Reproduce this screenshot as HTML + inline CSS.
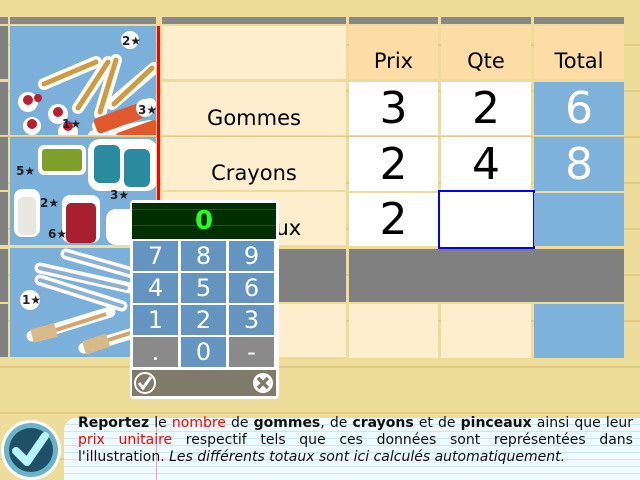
<!DOCTYPE html>
<html><head><meta charset="utf-8"><style>
*{margin:0;padding:0;box-sizing:border-box}
body{width:640px;height:480px;overflow:hidden;position:relative;font-family:"DejaVu Sans","Liberation Sans",sans-serif;
background:#eedc9a repeating-linear-gradient(to bottom,transparent 0 44px,#e2cc84 44px 46px);}
.a{position:absolute}
.c{position:absolute;display:flex;align-items:center;justify-content:center}
.cream{background:#feeece}
.hd{background:#fddca6}
.w{background:#fff}
.b{background:#7fb2da}
.g{background:#808080}
.key{position:absolute;width:45px;height:30px;background:#6494c0;color:#fff;font-size:24px;display:flex;align-items:center;justify-content:center}
.ln{white-space:nowrap;text-align:justify;text-align-last:justify;height:17px}
</style></head><body>
<div class="a" style="left:0;top:17px;width:624px;height:7px;background:#888"></div>
<div class="a" style="left:8px;top:17px;width:2px;height:7px;background:#eedc9a"></div>
<div class="a" style="left:156px;top:17px;width:6px;height:7px;background:#eedc9a"></div>
<div class="a" style="left:346px;top:17px;width:3px;height:7px;background:#eedc9a"></div>
<div class="a" style="left:438px;top:17px;width:3px;height:7px;background:#eedc9a"></div>
<div class="a" style="left:531px;top:17px;width:3px;height:7px;background:#eedc9a"></div>
<div class="a g" style="left:0;top:26px;width:8px;height:53px"></div>
<div class="a g" style="left:0;top:82px;width:8px;height:53px"></div>
<div class="a g" style="left:0;top:137px;width:8px;height:53px"></div>
<div class="a g" style="left:0;top:192px;width:8px;height:53px"></div>
<div class="a g" style="left:0;top:249px;width:8px;height:53px"></div>
<div class="a g" style="left:0;top:304px;width:8px;height:53px"></div>
<svg class="a" style="left:10px;top:26px" width="146" height="109">
<rect width="146" height="109" fill="#7bb0da"/>
<g stroke="#fff" stroke-width="12" stroke-linecap="round"><line x1="34" y1="58" x2="86" y2="36"/><line x1="68" y1="82" x2="98" y2="36"/><line x1="90" y1="88" x2="106" y2="34"/><line x1="102" y1="78" x2="144" y2="42"/><line x1="88" y1="100" x2="140" y2="78"/><line x1="84" y1="110" x2="140" y2="100"/></g>
<g stroke="#d29a3e" stroke-width="5" stroke-linecap="round"><line x1="34" y1="58" x2="86" y2="36"/><line x1="68" y1="82" x2="98" y2="36"/><line x1="90" y1="86" x2="106" y2="34"/><line x1="104" y1="78" x2="142" y2="42"/></g>
<rect x="84" y="84" width="50" height="16" rx="4" fill="#e0592c" transform="rotate(-20 110 92)"/>
<rect x="106" y="100" width="44" height="16" rx="4" fill="#e0592c" transform="rotate(-20 128 108)"/>
<g fill="#fff"><circle cx="18" cy="76" r="10"/><circle cx="48" cy="88" r="10"/><circle cx="22" cy="100" r="9"/><circle cx="58" cy="106" r="10"/><circle cx="120" cy="14" r="9"/><circle cx="135" cy="82" r="9"/></g>
<g fill="#b82030"><circle cx="18" cy="74" r="5"/><circle cx="48" cy="86" r="5"/><circle cx="22" cy="98" r="5"/><circle cx="58" cy="100" r="5"/><circle cx="28" cy="72" r="4"/></g>
<text x="112" y="19" font-size="12" font-weight="bold" fill="#222">2★</text>
<text x="128" y="88" font-size="12" font-weight="bold" fill="#222">3★</text>
<text x="52" y="102" font-size="12" font-weight="bold" fill="#222">1★</text>
</svg>
<svg class="a" style="left:10px;top:137px" width="146" height="108">
<rect width="146" height="108" fill="#7bb0da"/>
<rect x="28" y="8" width="48" height="30" rx="6" fill="#fff"/><rect x="32" y="12" width="40" height="22" rx="3" fill="#7ca02a"/>
<rect x="78" y="2" width="70" height="52" rx="12" fill="#fff"/>
<rect x="84" y="8" width="26" height="38" rx="6" fill="#2a8aa0"/><rect x="114" y="12" width="26" height="38" rx="6" fill="#2a8aa0"/>
<rect x="4" y="52" width="26" height="48" rx="8" fill="#fff"/><rect x="8" y="60" width="18" height="38" rx="5" fill="#e8e8e0"/>
<rect x="52" y="58" width="38" height="48" rx="8" fill="#fff"/><rect x="56" y="66" width="30" height="40" rx="5" fill="#a82030"/>
<rect x="96" y="72" width="40" height="36" rx="10" fill="#fff"/>
<text x="6" y="38" font-size="12" font-weight="bold" fill="#222">5★</text>
<text x="30" y="70" font-size="12" font-weight="bold" fill="#222">2★</text>
<text x="38" y="101" font-size="12" font-weight="bold" fill="#222">6★</text>
<text x="100" y="62" font-size="12" font-weight="bold" fill="#222">3★</text>
</svg>
<svg class="a" style="left:10px;top:248px" width="146" height="109">
<rect width="146" height="109" fill="#7bb0da"/>
<g stroke="#fff" stroke-width="11" stroke-linecap="round"><line x1="56" y1="6" x2="140" y2="30"/><line x1="30" y1="20" x2="120" y2="40"/><line x1="30" y1="32" x2="112" y2="58"/><line x1="22" y1="88" x2="100" y2="64"/><line x1="74" y1="100" x2="140" y2="80"/></g>
<g stroke="#8eb0d0" stroke-width="4" stroke-linecap="round"><line x1="56" y1="6" x2="140" y2="30"/><line x1="30" y1="20" x2="116" y2="40"/><line x1="30" y1="32" x2="112" y2="58"/></g>
<g stroke="#d8ba88" stroke-width="14"><line x1="22" y1="88" x2="46" y2="82"/><line x1="74" y1="100" x2="98" y2="92"/></g>
<g stroke="#d6a468" stroke-width="4"><line x1="46" y1="82" x2="96" y2="66"/><line x1="98" y1="92" x2="136" y2="80"/></g>
<circle cx="20" cy="52" r="10" fill="#fff"/><text x="12" y="56" font-size="12" font-weight="bold" fill="#222">1★</text>
</svg>
<div class="a" style="left:157px;top:26px;width:3px;height:331px;background:#f00"></div>
<div class="a cream" style="left:162px;top:26px;width:184px;height:53px"></div>
<div class="c cream" style="left:162px;top:82px;width:184px;height:53px;font-size:21px;padding-top:18px">Gommes</div>
<div class="c cream" style="left:162px;top:137px;width:184px;height:53px;font-size:21px;padding-top:18px">Crayons</div>
<div class="c cream" style="left:162px;top:192px;width:184px;height:53px;font-size:21px;padding-top:18px">Pinceaux</div>
<div class="a g" style="left:162px;top:249px;width:184px;height:53px"></div>
<div class="c cream" style="left:162px;top:304px;width:184px;height:53px;font-size:21px;padding-top:14px;color:#999">Total</div>
<div class="c hd" style="left:349px;top:26px;width:89px;height:53px;font-size:21px;padding-top:16px">Prix</div>
<div class="c hd" style="left:441px;top:26px;width:90px;height:53px;font-size:21px;padding-top:16px">Qte</div>
<div class="c hd" style="left:534px;top:26px;width:90px;height:53px;font-size:21px;padding-top:16px">Total</div>
<div class="c w" style="left:349px;top:82px;width:89px;height:53px;font-size:44px">3</div>
<div class="c w" style="left:441px;top:82px;width:90px;height:53px;font-size:44px">2</div>
<div class="c b" style="left:534px;top:82px;width:90px;height:53px;font-size:44px;color:#fff">6</div>
<div class="c w" style="left:349px;top:137px;width:89px;height:54px;font-size:44px">2</div>
<div class="c w" style="left:441px;top:137px;width:90px;height:54px;font-size:44px">4</div>
<div class="c b" style="left:534px;top:137px;width:90px;height:54px;font-size:44px;color:#fff">8</div>
<div class="c w" style="left:349px;top:193px;width:89px;height:53px;font-size:44px">2</div>
<div class="a w" style="left:438px;top:190px;width:97px;height:59px;border:2px solid #00f"></div>
<div class="a b" style="left:534px;top:193px;width:90px;height:53px"></div>
<div class="a g" style="left:349px;top:249px;width:275px;height:53px"></div>
<div class="a cream" style="left:349px;top:304px;width:89px;height:54px"></div>
<div class="a cream" style="left:441px;top:304px;width:90px;height:54px"></div>
<div class="a b" style="left:534px;top:304px;width:90px;height:54px"></div>
<div class="a" style="left:130px;top:200px;width:149px;height:199px;background:#fff;border-radius:4px"></div>
<div class="c" style="left:132px;top:203px;width:144px;height:36px;background:#003000;color:#2f2;font-weight:bold;font-size:26px;background-image:linear-gradient(to bottom,transparent 6px,#2a4a2a 6px 7px,transparent 7px 22px,#2a4a2a 22px 23px,transparent 23px)">0</div>
<div class="key" style="left:133px;top:241px">7</div><div class="key" style="left:181px;top:241px">8</div><div class="key" style="left:229px;top:241px">9</div>
<div class="key" style="left:133px;top:273px">4</div><div class="key" style="left:181px;top:273px">5</div><div class="key" style="left:229px;top:273px">6</div>
<div class="key" style="left:133px;top:305px">1</div><div class="key" style="left:181px;top:305px">2</div><div class="key" style="left:229px;top:305px">3</div>
<div class="key" style="left:133px;top:337px;background:#8a8a8a">.</div><div class="key" style="left:181px;top:337px">0</div><div class="key" style="left:229px;top:337px;background:#8a8a8a">-</div>
<div class="a" style="left:132px;top:370px;width:144px;height:26px;background:#807a6a"></div>
<svg class="a" style="left:133px;top:371px" width="24" height="24"><circle cx="12" cy="12" r="10" fill="none" stroke="#fff" stroke-width="2"/><path d="M6 12 L10 17 L18 6" fill="none" stroke="#fff" stroke-width="3"/></svg>
<svg class="a" style="left:251px;top:371px" width="24" height="24"><circle cx="12" cy="12" r="10" fill="#fff"/><path d="M7 7 L17 17 M17 7 L7 17" stroke="#807a6a" stroke-width="3.5"/></svg>
<div class="a" style="left:64px;top:418px;width:576px;height:62px;border-radius:12px 0 0 0;background:#eefafd repeating-linear-gradient(to bottom,transparent 0 6px,#cde6f0 6px 7px)"></div>
<div class="a" style="left:156px;top:418px;width:1px;height:62px;background:#f0a0a8"></div>
<div class="a" style="left:78px;top:415px;width:555px;font-size:14px;line-height:17px;color:#111">
<div class="ln"><b>Reportez</b> le <span style="color:#f00">nombre</span> de <b>gommes</b>, de <b>crayons</b> et de <b>pinceaux</b> ainsi que leur</div>
<div class="ln"><span style="color:#f00">prix unitaire</span> respectif tels que ces données sont représentées dans</div>
<div style="white-space:nowrap">l'illustration. <i>Les différents totaux sont ici calculés automatiquement.</i></div></div>
<svg class="a" style="left:0;top:418px" width="62" height="62"><circle cx="31" cy="32" r="30" fill="#fff"/><circle cx="31" cy="32" r="27" fill="#6ab4c8"/><circle cx="31" cy="32" r="22" fill="#1e5068"/><path d="M16 33 L27 44 L45 18" fill="none" stroke="#b8f4fa" stroke-width="8" stroke-linecap="round" stroke-linejoin="round"/></svg>
</body></html>
